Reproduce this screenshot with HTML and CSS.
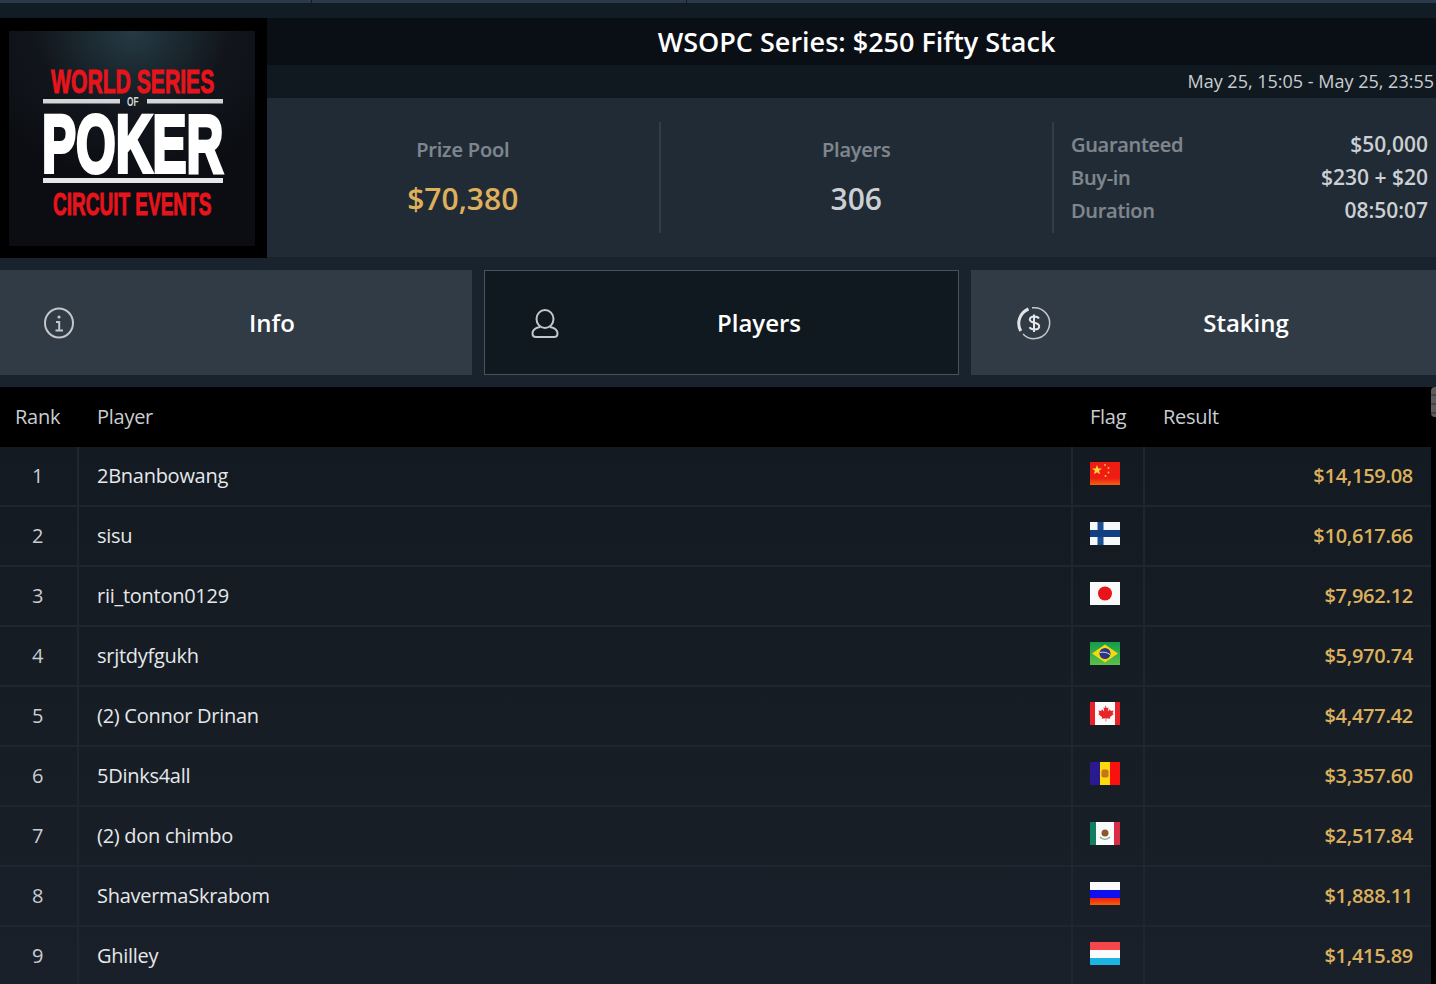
FILE: index.html
```html
<!DOCTYPE html>
<html lang="en">

<head>
    <meta charset="UTF-8">
    <meta name="viewport" content="width=device-width, initial-scale=1.0">
    <title>WSOPC Series: $250 Fifty Stack</title>
    <link rel="stylesheet" href="styles.css">
</head>

<body>
    <div class="top_strip">
        <div class="top_cell first"></div>
        <div class="top_cell second"></div>
        <div class="top_cell"></div>
    </div>

    <header class="tourney_header">
        <div class="logo_box">
            <svg class="logo" width="246" height="215" viewBox="0 0 246 215">
                <defs>
                    <radialGradient id="logoGlow" cx="0.5" cy="0" r="0.7">
                        <stop offset="0" stop-color="#253b45" />
                        <stop offset="0.55" stop-color="#12161c" />
                        <stop offset="1" stop-color="#0b0d12" />
                    </radialGradient>
                </defs>
                <rect width="246" height="215" fill="url(#logoGlow)" />
                <text class="logo_red" transform="translate(42 62) scale(.622 1)" font-size="34">WORLD SERIES</text>
                <rect x="34" y="68" width="77" height="4.500" fill="#d5d5d8" />
                <rect x="138" y="68" width="76" height="4.500" fill="#d5d5d8" />
                <text class="logo_of" transform="translate(118 75) scale(.69 1)" font-size="12">OF</text>
                <text class="logo_white" transform="translate(33 141) scale(.63 1)" font-size="81">POKER</text>
                <rect x="34" y="147" width="180" height="5" fill="#e6e6e8" />
                <text class="logo_red" transform="translate(44 184) scale(.613 1)" font-size="31">CIRCUIT EVENTS</text>
            </svg>
        </div>
        <div class="header_main">
            <h1 class="title_bar">WSOPC Series: $250 Fifty Stack</h1>
            <div class="date_bar">May 25, 15:05 - May 25, 23:55</div>
            <div class="stats">
                <div class="stat">
                    <div class="stat_label">Prize Pool</div>
                    <div class="stat_value gold">$70,380</div>
                </div>
                <div class="stat">
                    <div class="stat_label">Players</div>
                    <div class="stat_value">306</div>
                </div>
                <div class="stat_list">
                    <div class="stat_row"><span>Guaranteed</span><b>$50,000</b></div>
                    <div class="stat_row"><span>Buy-in</span><b>$230 + $20</b></div>
                    <div class="stat_row"><span>Duration</span><b>08:50:07</b></div>
                </div>
            </div>
        </div>
    </header>

    <nav class="tabs">
        <div class="tab info">
            <svg class="tab_icon" width="32" height="32" viewBox="0 0 32 32" fill="none" stroke="#c4c7ca" stroke-width="2">
                <ellipse cx="16" cy="16" rx="14" ry="14.500" />
                <circle cx="16" cy="10" r="1.600" fill="#c4c7ca" stroke="none" />
                <path d="M13 15h3.200v8.500M12.500 23.500h7.500" stroke-width="2" />
            </svg>
            <span>Info</span>
        </div>
        <div class="tab players active">
            <svg class="tab_icon" width="32" height="32" viewBox="0 0 32 32" fill="none" stroke="#c4c7ca" stroke-width="2">
                <ellipse cx="16" cy="12" rx="8.500" ry="9" />
                <path d="M11 20C6 21 3.500 23 3.500 26.500 3.500 28.700 5 30 7 30H25c2 0 3.500-1.300 3.500-3.500 0-3.500-2.500-5.500-7.500-6.500" />
            </svg>
            <span>Players</span>
        </div>
        <div class="tab staking">
            <svg class="tab_icon" width="34" height="34" viewBox="0 0 34 34" fill="none" stroke="#c4c7ca" stroke-width="1.500">
                <path d="M15 1.800A15.500 15.500 0 1 1 6 28" />
                <path d="M3.800 25A15.500 15.500 0 0 1 11.500 3" stroke-width="3" stroke="#e2e3e5" />
                <path d="M22 12.500c-.8-1.300-2.500-2-4.800-2-2.700 0-4.400 1.200-4.400 3 0 4.200 9.400 2.400 9.400 6.800 0 1.900-1.900 3.200-4.600 3.200-2.400 0-4.200-.8-5.100-2.300M17 8.500v17.500" stroke="#e6e7e9" stroke-width="2" />
            </svg>
            <span>Staking</span>
        </div>
    </nav>

    <div class="results_wrap">
        <table class="results">
            <thead>
                <tr>
                    <th class="col_rank">Rank</th>
                    <th>Player</th>
                    <th class="col_flag">Flag</th>
                    <th class="col_result">Result</th>
                </tr>
            </thead>
            <tbody>
                <tr>
                    <td class="col_rank">1</td>
                    <td>2Bnanbowang</td>
                    <td class="col_flag">
                        <svg class="flag" viewBox="0 0 30 23">
                            <defs><linearGradient id="cn" x1="0" y1="0" x2="0" y2="1"><stop offset="0.7" stop-color="#ee1c13" /><stop offset="1" stop-color="#f4620f" /></linearGradient></defs>
                            <rect width="30" height="23" fill="url(#cn)" />
                            <polygon points="7,3 8.300,6.500 12,6.500 9,8.800 10.100,12.300 7,10.200 3.900,12.300 5,8.800 2,6.500 5.700,6.500" fill="#ffd93a" />
                            <g fill="#f5b93a"><circle cx="15" cy="3" r="1" /><circle cx="18.500" cy="6" r="1" /><circle cx="18.500" cy="10.500" r="1" /><circle cx="15.500" cy="14" r="1" /></g>
                        </svg>
                    </td>
                    <td class="col_result">$14,159.08</td>
                </tr>
                <tr>
                    <td class="col_rank">2</td>
                    <td>sisu</td>
                    <td class="col_flag">
                        <svg class="flag" viewBox="0 0 30 23">
                            <rect width="30" height="23" fill="#f7f8fa" />
                            <rect x="7.500" width="6" height="23" fill="#1c4f8f" />
                            <rect y="8" width="30" height="7" fill="#123f82" />
                        </svg>
                    </td>
                    <td class="col_result">$10,617.66</td>
                </tr>
                <tr>
                    <td class="col_rank">3</td>
                    <td>rii_tonton0129</td>
                    <td class="col_flag">
                        <svg class="flag" viewBox="0 0 30 23">
                            <rect width="30" height="23" fill="#f9f9f9" />
                            <circle cx="15" cy="11.500" r="7" fill="#e8141c" />
                        </svg>
                    </td>
                    <td class="col_result">$7,962.12</td>
                </tr>
                <tr>
                    <td class="col_rank">4</td>
                    <td>srjtdyfgukh</td>
                    <td class="col_flag">
                        <svg class="flag" viewBox="0 0 30 23">
                            <defs><linearGradient id="br" x1="0" y1="0" x2="0" y2="1"><stop offset="0" stop-color="#149b4a" /><stop offset="1" stop-color="#5cc24a" /></linearGradient></defs>
                            <rect width="30" height="23" fill="url(#br)" />
                            <polygon points="15,2.500 28,11.500 15,20.500 2,11.500" fill="#f4d90f" />
                            <circle cx="15" cy="11.500" r="5.500" fill="#2b3585" />
                            <path d="M10 10.500c3.500-.8 7-.2 10 2" stroke="#d5d8e6" fill="none" />
                        </svg>
                    </td>
                    <td class="col_result">$5,970.74</td>
                </tr>
                <tr>
                    <td class="col_rank">5</td>
                    <td>(2) Connor Drinan</td>
                    <td class="col_flag">
                        <svg class="flag" viewBox="0 0 30 23">
                            <rect width="30" height="23" fill="#fbfbfb" />
                            <rect width="5" height="23" fill="#ea2227" />
                            <rect x="25" width="5" height="23" fill="#ea2227" />
                            <path d="M15 3l1.800 3.200 1.700-.9-.7 4.200 2.200-2.300.8 1.700 2.700-.5-.9 2.900 1.200.6-4 3.300.5 1.600-4-.6v3.400h-.6v-3.400l-4 .6.5-1.600-4-3.300 1.200-.6-.9-2.900 2.700.5.800-1.700 2.200 2.300-.7-4.200 1.700.9z" fill="#e6262b" />
                        </svg>
                    </td>
                    <td class="col_result">$4,477.42</td>
                </tr>
                <tr>
                    <td class="col_rank">6</td>
                    <td>5Dinks4all</td>
                    <td class="col_flag">
                        <svg class="flag" viewBox="0 0 30 23">
                            <rect width="10" height="23" fill="#2a1a8f" />
                            <rect x="10" width="10" height="23" fill="#fcd90c" />
                            <rect x="20" width="10" height="23" fill="#f8110f" />
                            <rect x="11.500" y="7.500" width="7" height="8" rx="2" fill="#c8741c" />
                        </svg>
                    </td>
                    <td class="col_result">$3,357.60</td>
                </tr>
                <tr>
                    <td class="col_rank">7</td>
                    <td>(2) don chimbo</td>
                    <td class="col_flag">
                        <svg class="flag" viewBox="0 0 30 23">
                            <rect width="30" height="23" fill="#fbfbfb" />
                            <rect width="6" height="23" fill="#12805f" />
                            <rect x="24" width="6" height="23" fill="#d92d45" />
                            <circle cx="15" cy="11" r="3.500" fill="#8a5a2c" />
                            <path d="M10 15c3 3 7 3 10 0" stroke="#7fae9a" stroke-width="1.500" fill="none" />
                        </svg>
                    </td>
                    <td class="col_result">$2,517.84</td>
                </tr>
                <tr>
                    <td class="col_rank">8</td>
                    <td>ShavermaSkrabom</td>
                    <td class="col_flag">
                        <svg class="flag" viewBox="0 0 30 23">
                            <defs><linearGradient id="ru" x1="0" y1="0" x2="0" y2="1"><stop offset="0" stop-color="#ee1c13" /><stop offset="1" stop-color="#f4620f" /></linearGradient></defs>
                            <rect width="30" height="8" fill="#fbfbfb" />
                            <rect y="8" width="30" height="8" fill="#0f10f0" />
                            <rect y="16" width="30" height="7" fill="url(#ru)" />
                        </svg>
                    </td>
                    <td class="col_result">$1,888.11</td>
                </tr>
                <tr>
                    <td class="col_rank">9</td>
                    <td>Ghilley</td>
                    <td class="col_flag">
                        <svg class="flag" viewBox="0 0 30 23">
                            <rect width="30" height="8" fill="#f5474b" />
                            <rect y="8" width="30" height="8" fill="#fbfbfb" />
                            <rect y="16" width="30" height="7" fill="#1cb4e2" />
                        </svg>
                    </td>
                    <td class="col_result">$1,415.89</td>
                </tr>
            </tbody>
        </table>
        <div class="scrollbar">
            <div class="scroll_thumb"></div>
        </div>
    </div>
</body>

</html>
```

FILE: styles.css
```css
* {
    margin: 0;
    padding: 0;
    box-sizing: border-box;
}

html,
body {
    height: 984px;
    overflow: hidden;
}

body {
    background: #18232d;
    font-family: "Open Sans", "Noto Sans", sans-serif;
    color: white;
}

.top_strip {
    display: flex;
    height: 18px;
    background: #121c25;
}

.top_cell {
    flex: 1;
    height: 3px;
    background: #2a3a4a;
}

.top_cell.first {
    flex: none;
    width: 312px;
    border-right: 1px solid #121c25;
}

.top_cell.second {
    flex: none;
    width: 375px;
    border-right: 1px solid #121c25;
}

.tourney_header {
    display: flex;
    height: 240px;
}

.logo_box {
    width: 267px;
    height: 240px;
    background: black;
    padding: 13px 0 0 9px;
}

.logo {
    display: block;
}

.logo text {
    font-family: "Liberation Sans", sans-serif;
    font-weight: bold;
}

.logo_red {
    fill: #e8141c;
    stroke: #e8141c;
    stroke-width: 1px;
}

.logo_white {
    fill: white;
    stroke: white;
    stroke-width: 4px;
}

.logo_of {
    fill: #d5d5d8;
}

.header_main {
    flex: 1;
    display: flex;
    flex-flow: column;
}

.title_bar {
    height: 47px;
    background: #0a0f15;
    font-size: 27px;
    font-weight: 600;
    line-height: 47px;
    text-align: center;
    padding-left: 10px;
}

.date_bar {
    height: 33px;
    background: #111920;
    font-size: 18px;
    line-height: 33px;
    text-align: right;
    padding-right: 2px;
    color: #c9cdd1;
}

.stats {
    height: 159px;
    background: #212b35;
    display: flex;
    align-items: center;
}

.stat {
    width: 393.5px;
    height: 111px;
    border-right: 2px solid #333d47;
    text-align: center;
}

.stat_label {
    margin-top: 14px;
    font-size: 20px;
    letter-spacing: -0.2px;
    font-weight: 600;
    -webkit-text-stroke: 0.2px;
    color: #7f868d;
    line-height: 28px;
}

.stat_value {
    margin-top: 15px;
    font-size: 30px;
    font-weight: 600;
    line-height: 40px;
    color: #ccd0d4;
}

.stat_value.gold {
    color: #dfb05c;
}

.stat_list {
    flex: 1;
    padding: 0 8px 0 17px;
}

.stat_row {
    display: flex;
    justify-content: space-between;
    font-size: 20px;
    line-height: 33px;
    font-weight: 600;
}

.stat_row span {
    letter-spacing: -0.3px;
    -webkit-text-stroke: 0.2px;
    color: #7f868d;
}

.stat_row b {
    font-size: 21px;
    font-weight: 600;
    color: #ccd0d4;
}

.tabs {
    display: flex;
    gap: 12px;
    margin-top: 12px;
    height: 105px;
}

.tab {
    position: relative;
    display: flex;
    align-items: center;
    justify-content: center;
    background: #313b46;
    font-size: 24px;
    font-weight: 600;
}

.tab.info {
    width: 472px;
    padding-left: 72px;
}

.tab.players {
    width: 475px;
    padding-left: 75px;
}

.tab.staking {
    flex: 1;
    padding-left: 85px;
}

.tab.active {
    background: #111920;
    border: 1px solid #4a5159;
}

.tab_icon {
    position: absolute;
    left: 43px;
    top: 37px;
}

.tab.active .tab_icon {
    left: 44px;
    top: 36px;
}

.tab.staking .tab_icon {
    left: 46px;
    top: 36px;
}

.results_wrap {
    display: flex;
    margin-top: 12px;
}

.results {
    width: 1431px;
    border-collapse: separate;
    border-spacing: 0;
    table-layout: fixed;
    font-size: 20px;
    letter-spacing: -0.27px;
}

.results th {
    height: 60px;
    background: black;
    font-weight: 400;
    text-align: left;
    color: #c9cdd1;
    padding: 0 0 2px 18px;
}

.results th.col_rank {
    width: 79px;
    padding-left: 15px;
}

.results th.col_flag {
    width: 72px;
    padding-left: 17px;
}

.results th.col_result {
    width: 286px;
}

.results tbody {
    background: linear-gradient(#131a21, #1a2029);
}

.results td {
    height: 60px;
    border-right: 2px solid #1e262f;
    border-bottom: 2px solid #1e262f;
    padding: 0 0 2px 18px;
    color: #e6e8ea;
}

.results td:last-child {
    border-right: none;
}

.results td.col_rank {
    padding: 0 2px 2px 0;
    text-align: center;
    color: #c9cdd1;
}

.results td.col_flag {
    padding-left: 17px;
}

.results td.col_result {
    padding: 0 18px 2px 0;
    text-align: right;
    font-weight: 600;
    color: #dcb05c;
}

.flag {
    display: block;
    width: 30px;
    height: 23px;
    margin-bottom: 3px;
}

.scrollbar {
    width: 5px;
    height: 600px;
    background: black;
}

.scroll_thumb {
    height: 30px;
    border-radius: 4px 0 0 4px;
    background: repeating-linear-gradient(#5c5c5c 0, #5c5c5c 7px, #454545 7px, #454545 9px);
}
```
